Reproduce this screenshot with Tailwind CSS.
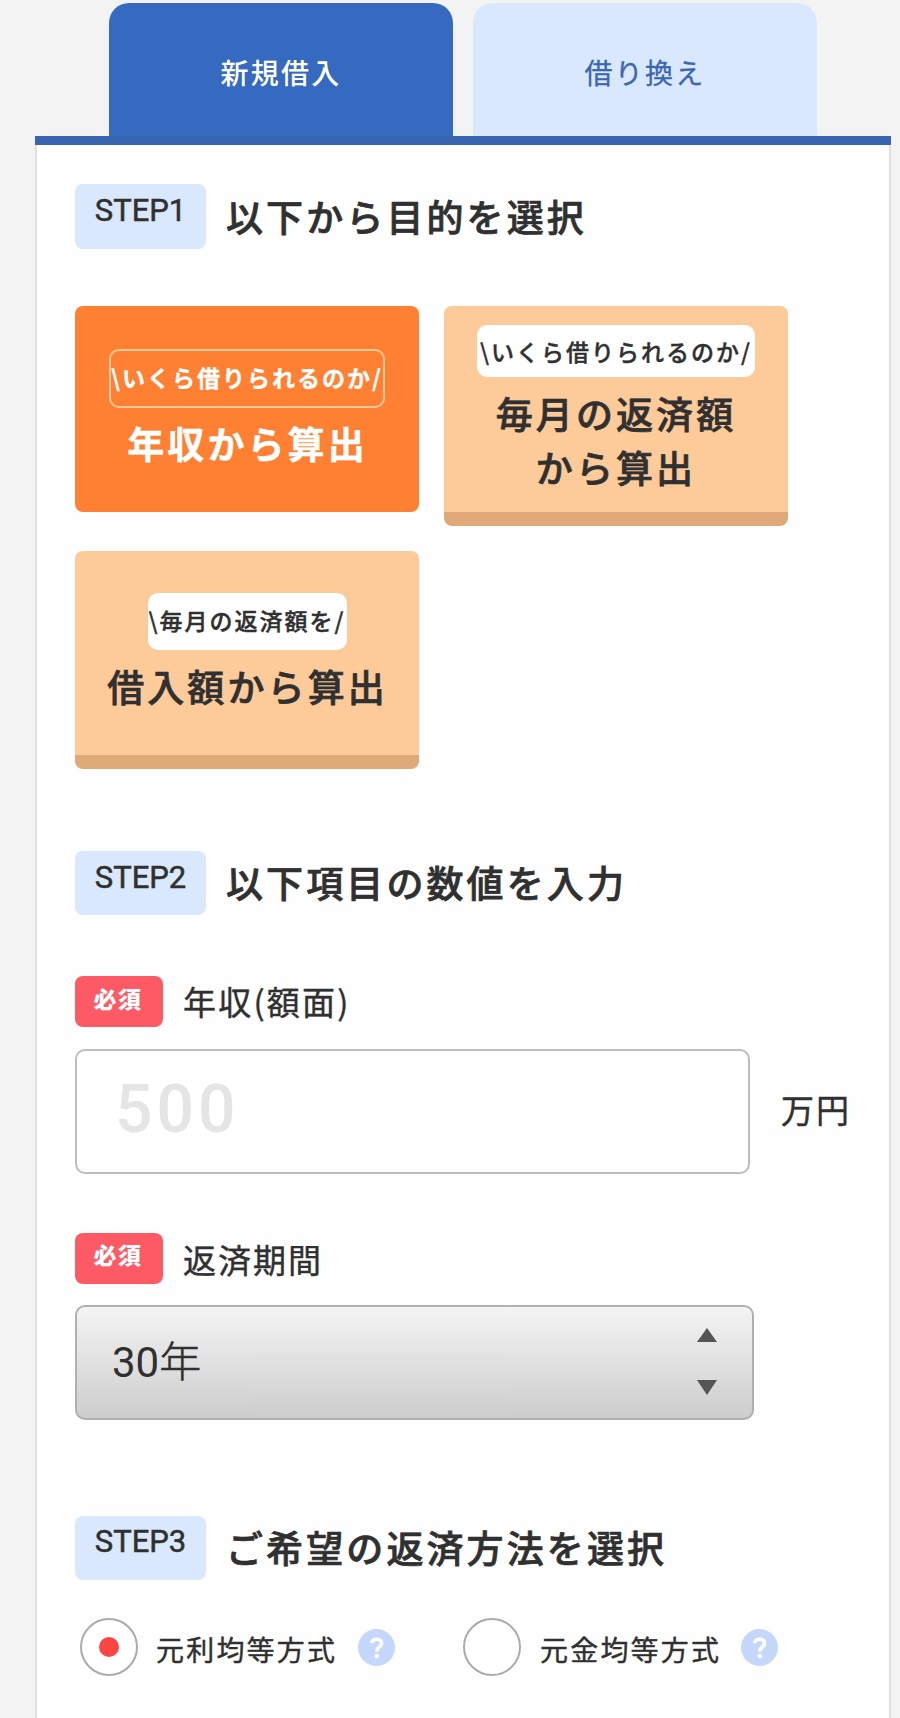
<!DOCTYPE html>
<html lang="ja">
<head>
<meta charset="utf-8">
<title>ローンシミュレーション</title>
<script src="https://cdn.jsdelivr.net/npm/@tailwindcss/browser@4"></script>
</head>
<body class="bg-[#f3f3f3] font-['Noto_Sans_CJK_JP',sans-serif] text-[#303030]">
<div class="flex h-[1718px] w-[900px] flex-col overflow-hidden pl-[35px] pr-[9px] pt-[3px]">
  <nav class="flex h-[133px] shrink-0 gap-5 pl-[74px] text-[28px] leading-[40px] tracking-[2.2px]">
    <button class="w-[344px] rounded-t-[20px] bg-[#366ac0] pt-[5px] font-medium text-white">新規借入</button>
    <button class="w-[344px] rounded-t-[20px] bg-[#d9e8fd] pt-[5px] text-[#3c66ad] [-webkit-text-stroke:0.3px]">借り換え</button>
  </nav>
  <div class="h-[9px] shrink-0 bg-[#3a66b1]"></div>
  <main class="h-[1573px] shrink-0 border-x-2 border-x-[#e0e0e0] bg-[#fefefe] pl-[38px]">
    <section class="pt-[39px]">
      <div class="flex h-[65px] gap-5">
        <span class="w-[131px] rounded-lg bg-[#d9e8fd] pt-[7px] text-center font-['Roboto',sans-serif] text-[31px] leading-[40px] [-webkit-text-stroke:0.5px]">STEP1</span>
        <h2 class="pt-1 text-[37px] font-medium leading-[56px] tracking-[3.1px] [-webkit-text-stroke:0.7px]">以下から目的を選択</h2>
      </div>
      <div class="mt-[57px] grid grid-cols-[344px_344px] items-start gap-x-[25px] gap-y-[25px]">
        <button class="flex h-[206px] flex-col items-center rounded-lg bg-[#ff7f33] pt-[43px] font-bold text-white">
          <span class="flex h-[59px] w-[276px] items-center justify-center whitespace-nowrap rounded-[10px] border-[2.5px] border-[#ffc999] pb-[2px] text-[23px] tracking-[2px] [-webkit-text-stroke:0.3px]">\いくら借りられるのか/</span>
          <span class="mt-[8px] pl-[1px] text-[37px] leading-[54px] tracking-[3.1px] [-webkit-text-stroke:0.4px]">年収から算出</span>
        </button>
        <button class="flex h-[220px] flex-col items-center rounded-lg border-b-[14px] border-[#dfa97a] bg-[#fdca9a] pt-[19px] font-medium">
          <span class="flex h-[52px] w-[278px] items-center justify-center whitespace-nowrap rounded-[10px] bg-white text-[23px] tracking-[2px] [-webkit-text-stroke:0.4px]">\いくら借りられるのか/</span>
          <span class="mt-[9px] text-[37px] leading-[54px] tracking-[3.1px] [-webkit-text-stroke:0.7px]">毎月の返済額<br>から算出</span>
        </button>
        <button class="flex h-[218px] flex-col items-center rounded-lg border-b-[14px] border-[#dfa97a] bg-[#fdca9a] pt-[42px] font-medium">
          <span class="flex h-[57px] w-[199px] items-center justify-center whitespace-nowrap rounded-[10px] bg-white pb-[2px] text-[23px] tracking-[2px] [-webkit-text-stroke:0.4px]">\毎月の返済額を/</span>
          <span class="mt-[9px] pl-[1px] text-[37px] leading-[54px] tracking-[3.1px] [-webkit-text-stroke:0.7px]">借入額から算出</span>
        </button>
      </div>
    </section>
    <section class="mt-[82px]">
      <div class="flex h-16 gap-5">
        <span class="w-[131px] rounded-lg bg-[#d9e8fd] pt-[7px] text-center font-['Roboto',sans-serif] text-[31px] leading-[40px] [-webkit-text-stroke:0.5px]">STEP2</span>
        <h2 class="pt-[3px] text-[37px] font-medium leading-[56px] tracking-[3.1px] [-webkit-text-stroke:0.7px]">以下項目の数値を入力</h2>
      </div>
      <div class="mt-[61px] flex h-[51px] gap-5">
        <span class="w-[88px] rounded-lg bg-[#fd5a66] pr-[2px] pt-[2px] text-center text-[23px] font-black leading-[40px] tracking-[1.5px] text-white">必須</span>
        <label class="text-[33px] leading-[50px] tracking-[2.2px] [-webkit-text-stroke:0.4px]">年収(額面)</label>
      </div>
      <div class="mt-[22px] flex h-[125px] items-center">
        <div class="flex h-[125px] w-[675px] items-center rounded-[10px] border-[2.5px] border-[#bdbdbd] bg-white pb-[4px] pl-[38px] font-['Roboto',sans-serif] text-[66px] font-medium tracking-[4px] text-[#e5e5e5]">500</div>
        <span class="ml-[31px] pb-[5px] text-[33px] leading-[50px] tracking-[2px] [-webkit-text-stroke:0.4px]">万円</span>
      </div>
      <div class="mt-[59px] flex h-[51px] gap-5">
        <span class="w-[88px] rounded-lg bg-[#fd5a66] pr-[2px] pt-[1px] text-center text-[23px] font-black leading-[40px] tracking-[1.5px] text-white">必須</span>
        <label class="pt-[1px] text-[33px] leading-[50px] tracking-[2px] [-webkit-text-stroke:0.4px]">返済期間</label>
      </div>
      <div class="mt-[21px] flex h-[115px] w-[679px] items-center justify-between rounded-[10px] border-[2.5px] border-[#b0b0b0] bg-linear-to-b from-[#f4f4f4] to-[#cdcdcd] pl-[35px] pr-[35px]">
        <span class="font-['Roboto','Noto_Sans_CJK_JP',sans-serif] text-[42px] leading-[60px]">30<span class="font-light [-webkit-text-stroke:0.5px]">年</span></span>
        <svg class="mb-[3px] h-[67px] w-5" viewBox="0 0 20 67" fill="#555"><path d="M10 0 20 14H0zM0 52H20L10 67z"/></svg>
      </div>
    </section>
    <section class="mt-[96px]">
      <div class="flex h-16 gap-5">
        <span class="w-[131px] rounded-lg bg-[#d9e8fd] pt-[6px] text-center font-['Roboto',sans-serif] text-[31px] leading-[40px] [-webkit-text-stroke:0.5px]">STEP3</span>
        <h2 class="pt-[3px] text-[37px] font-medium leading-[56px] tracking-[3.1px] [-webkit-text-stroke:0.7px]">ご希望の返済方法を選択</h2>
      </div>
      <div class="mt-[38px] flex h-[58px] items-center pl-[5px] text-[28px] leading-[40px] tracking-[2.2px]">
        <span class="flex size-[58px] items-center justify-center rounded-full border-[2.5px] border-[#ababab] bg-white"><span class="size-5 rounded-full bg-[#fb4444]"></span></span>
        <span class="ml-[18px] w-[202px] pt-[3px] [-webkit-text-stroke:0.4px]">元利均等方式</span>
        <svg class="size-[37px]" viewBox="0 0 37 37" fill="none"><circle cx="18.5" cy="18.5" r="18.5" fill="#c5d8fc"/><path d="M13.8 14.2Q14 10.2 18.8 10.2Q23.5 10.3 23.5 14.2Q23.5 16.5 21 18.2Q18.8 19.8 18.8 22.5" stroke="#fff" stroke-width="3.6"/><circle cx="18.8" cy="27" r="2.3" fill="#fff"/></svg>
        <span class="ml-[68px] size-[58px] rounded-full border-[2.5px] border-[#ababab] bg-white"></span>
        <span class="ml-[19px] w-[201px] pt-[3px] [-webkit-text-stroke:0.4px]">元金均等方式</span>
        <svg class="size-[37px]" viewBox="0 0 37 37" fill="none"><circle cx="18.5" cy="18.5" r="18.5" fill="#c5d8fc"/><path d="M13.8 14.2Q14 10.2 18.8 10.2Q23.5 10.3 23.5 14.2Q23.5 16.5 21 18.2Q18.8 19.8 18.8 22.5" stroke="#fff" stroke-width="3.6"/><circle cx="18.8" cy="27" r="2.3" fill="#fff"/></svg>
      </div>
    </section>
  </main>
</div>
</body>
</html>
